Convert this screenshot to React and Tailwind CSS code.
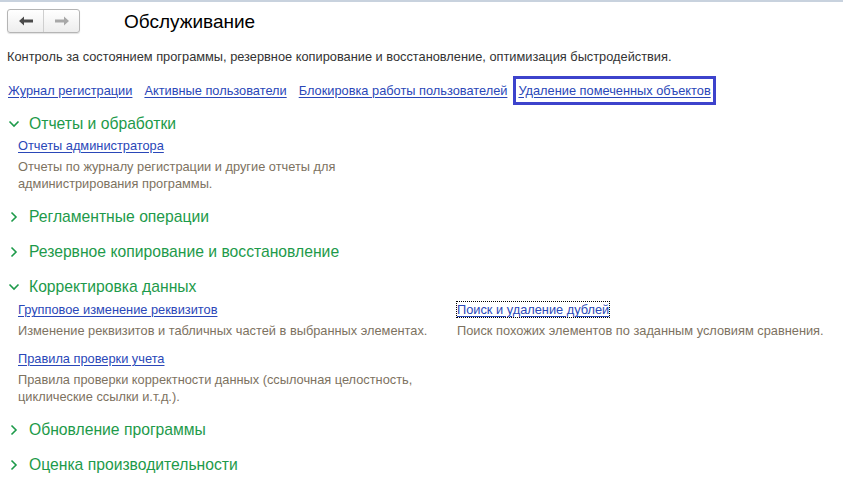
import React from "react";

const font = { fontFamily: '"Liberation Sans", Arial, sans-serif' };

function Chevron({ open }) {
  return open ? (
    <svg width="12" height="12" viewBox="0 0 12 12" className="shrink-0">
      <path d="M1.5 3.5 L6 8 L10.5 3.5" fill="none" stroke="#1d9a4a" strokeWidth="1.6" />
    </svg>
  ) : (
    <svg width="12" height="12" viewBox="0 0 12 12" className="shrink-0">
      <path d="M3.5 1.5 L8 6 L3.5 10.5" fill="none" stroke="#1d9a4a" strokeWidth="1.6" />
    </svg>
  );
}

function SectionHeader({ title, open, className = "" }) {
  return (
    <div className={`flex items-center h-[24px] pl-[8px] gap-[9px] ${className}`}>
      <Chevron open={open} />
      <span className="text-[15.7px] text-[#1d9a4a] leading-none">{title}</span>
    </div>
  );
}

function Item({ link, desc, focused, className = "" }) {
  return (
    <div className={className}>
      <div className="h-[16px] leading-[16px]">
        <a
          href="#"
          className={`text-[12.8px] text-[#2a47b8] underline underline-offset-2 ${
            focused ? "outline-1 outline-dotted outline-black" : ""
          }`}
        >
          {link}
        </a>
      </div>
      <p className="mt-[5px] text-[12.8px] leading-[17px] text-[#7d725f]">{desc}</p>
    </div>
  );
}

export default function App() {
  return (
    <div style={font} className="w-[843px] h-[480px] bg-white overflow-hidden">
      <div className="h-[2px] bg-[#c8d2de]" />

      <div className="flex items-center mt-[7px] pl-[7px] h-[24px]">
        <div className="flex h-[24px] w-[73px] rounded-[3px] border border-[#b5b5b5] bg-gradient-to-b from-white to-[#ededed] shadow-[0_1px_1px_rgba(0,0,0,0.12)]">
          <button className="flex-1 flex items-center justify-center border-r border-[#cfcfcf]">
            <svg width="14" height="10" viewBox="0 0 14 10">
              <path d="M0 5 L5 0.5 V3.5 H14 V6.5 H5 V9.5 Z" fill="#4a4a4a" />
            </svg>
          </button>
          <button className="flex-1 flex items-center justify-center">
            <svg width="14" height="10" viewBox="0 0 14 10">
              <path d="M14 5 L9 0.5 V3.5 H0 V6.5 H9 V9.5 Z" fill="#a8a8a8" />
            </svg>
          </button>
        </div>
        <h1 className="ml-[44px] text-[19px] text-black leading-none">Обслуживание</h1>
      </div>

      <p className="mt-[16px] pl-[7px] text-[12.8px] leading-[16px] text-[#333]">
        Контроль за состоянием программы, резервное копирование и восстановление, оптимизация быстродействия.
      </p>

      <div className="flex items-center mt-[11px] pl-[8px] h-[29px] text-[12.8px] whitespace-nowrap">
        <a href="#" className="text-[#2a47b8] underline underline-offset-2 mr-[12px]">
          Журнал регистрации
        </a>
        <a href="#" className="text-[#2a47b8] underline underline-offset-2 mr-[12px]">
          Активные пользователи
        </a>
        <a href="#" className="text-[#2a47b8] underline underline-offset-2 mr-[6px]">
          Блокировка работы пользователей
        </a>
        <div className="h-[29px] flex items-center px-[2px] border-[3px] border-[#3d43cc]">
          <a href="#" className="text-[#2a47b8] underline underline-offset-2">
            Удаление помеченных объектов
          </a>
        </div>
      </div>

      <SectionHeader title="Отчеты и обработки" open className="mt-[7px]" />
      <Item
        className="pl-[18px] mt-[1px] w-[360px]"
        link="Отчеты администратора"
        desc="Отчеты по журналу регистрации и другие отчеты для администрирования программы."
      />

      <SectionHeader title="Регламентные операции" className="mt-[13px]" />
      <SectionHeader title="Резервное копирование и восстановление" className="mt-[11px]" />
      <SectionHeader title="Корректировка данных" open className="mt-[11px]" />

      <div className="grid grid-cols-[439px_1fr] pl-[18px] mt-[2px]">
        <div>
          <Item
            link="Групповое изменение реквизитов"
            desc="Изменение реквизитов и табличных частей в выбранных элементах."
          />
          <Item
            className="mt-[11px] w-[420px]"
            link="Правила проверки учета"
            desc="Правила проверки корректности данных (ссылочная целостность, циклические ссылки и.т.д.)."
          />
        </div>
        <div>
          <Item
            focused
            link="Поиск и удаление дублей"
            desc="Поиск похожих элементов по заданным условиям сравнения."
          />
        </div>
      </div>

      <SectionHeader title="Обновление программы" className="mt-[13px]" />
      <SectionHeader title="Оценка производительности" className="mt-[11px]" />
    </div>
  );
}
